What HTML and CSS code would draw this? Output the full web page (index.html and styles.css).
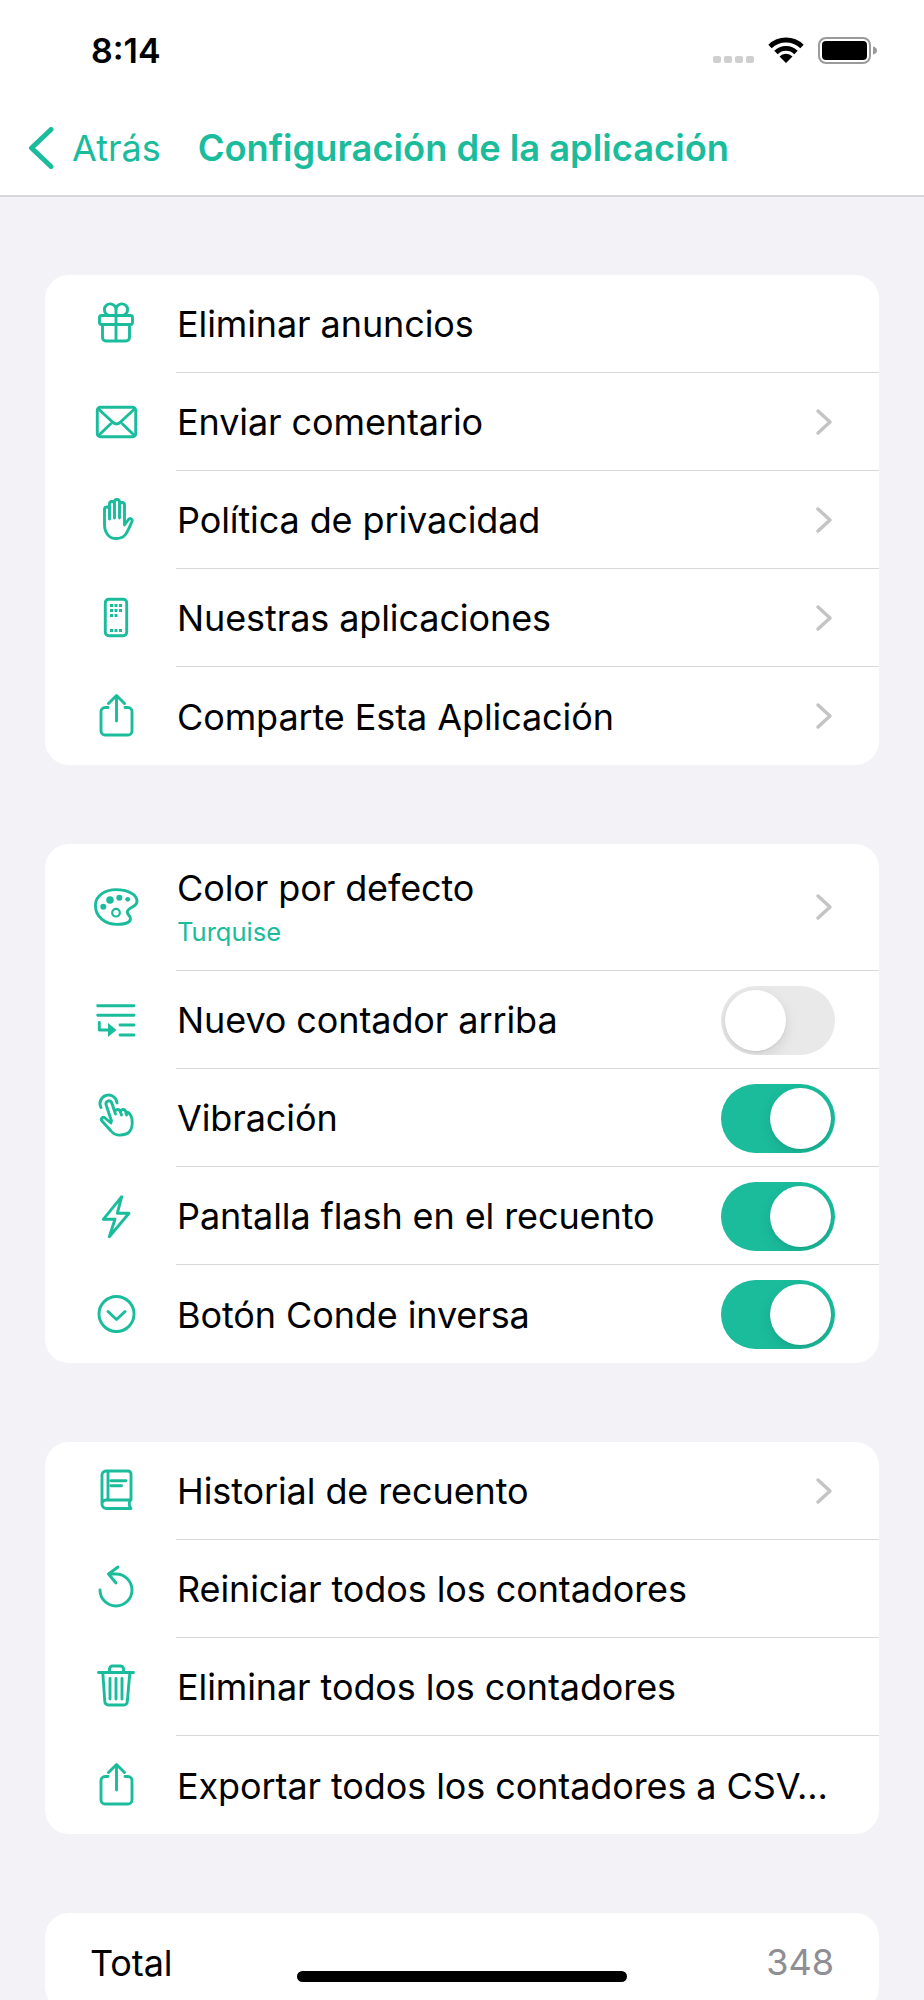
FILE: index.html
```html
<!DOCTYPE html>
<html lang="es">
<head>
    <meta charset="UTF-8">
    <meta name="viewport" content="width=device-width, initial-scale=1.0">
    <title>Configuración de la aplicación</title>
    <link rel="stylesheet" href="styles.css">
</head>
<body>
    <header class="top">
        <div class="status">
            <span class="time">8:14</span>
            <div class="status-icons">
                <div class="signal"><i></i><i></i><i></i><i></i></div>
                <svg class="wifi" width="36" height="26" viewBox="0 0 36 26">
                    <path d="M2 9.500A23 23 0 0 1 34 9.500" fill="none" stroke="#000" stroke-width="4.800"/>
                    <path d="M8 15.500A14 14 0 0 1 28 15.500" fill="none" stroke="#000" stroke-width="4.800"/>
                    <path d="M18 26L11.500 19.500A9 9 0 0 1 24.500 19.500Z" fill="#000"/>
                </svg>
                <svg class="battery" width="60" height="27" viewBox="0 0 60 27">
                    <rect x="1" y="1" width="51" height="25" rx="7" fill="none" stroke="#9a9a9a" stroke-width="2"/>
                    <rect x="4" y="4" width="45" height="19" rx="4" fill="#000"/>
                    <path d="M55 9.500c2.500.5 4 2 4 4s-1.500 3.500-4 4z" fill="#9a9a9a"/>
                </svg>
            </div>
        </div>
        <nav class="nav">
            <svg class="back-icon" width="26" height="42" viewBox="0 0 26 42"><path d="M23 2.500L3.500 21L23 39.500"/></svg>
            <span class="back">Atrás</span>
            <span class="title">Configuración de la aplicación</span>
        </nav>
    </header>

    <main class="content">
        <section class="card">
            <div class="row">
                <svg class="ico" viewBox="0 0 44 44"><rect x="5.500" y="13.500" width="33" height="9" rx="2"/><path d="M8.500 23v12.500a3.500 3.500 0 0 0 3.500 3.500h20a3.500 3.500 0 0 0 3.500-3.500V23M22 13.500V39M22 13.500h-6a5.800 5.800 0 1 1 6-5.500zM22 13.500h6a5.800 5.800 0 1 0-6-5.500z"/></svg>
                <div class="row-body"><span class="label">Eliminar anuncios</span></div>
            </div>
            <div class="row">
                <svg class="ico" viewBox="0 0 44 44"><rect x="3.300" y="7.300" width="38.400" height="29.400" rx="3"/><path d="M4.500 9L19 22.500q3.500 2.800 7 0L40.500 9M4.500 35.500L16.500 24M40.500 35.500L28.500 24"/></svg>
                <div class="row-body"><span class="label">Enviar comentario</span><svg class="chev" width="18" height="28" viewBox="0 0 18 28"><path d="M3 3l12 11L3 25"/></svg></div>
            </div>
            <div class="row">
                <svg class="ico" viewBox="0 0 44 44"><path d="M10.500 26V11.500a2.500 2.500 0 0 1 5 0V21M15.500 20V6a2.500 2.500 0 0 1 5 0v14M20.500 20V4a2.500 2.500 0 0 1 5 0v16M25.500 20V7a2.500 2.500 0 0 1 5 0v20l4-5.500c1.600-2 4.500-.2 3.500 2-2.500 5.500-4 9.500-6.500 13-2 2.700-5 4-9.500 4-6.500 0-11.500-5-11.500-14.500"/></svg>
                <div class="row-body"><span class="label">Política de privacidad</span><svg class="chev" width="18" height="28" viewBox="0 0 18 28"><path d="M3 3l12 11L3 25"/></svg></div>
            </div>
            <div class="row">
                <svg class="ico" viewBox="0 0 44 44"><rect x="11.300" y="3.300" width="21.400" height="36.400" rx="3.500"/><path class="solid" d="M16 8h3v3h-3zM20.500 8h3v3h-3zM25 8h3v3h-3zM16 13h3v3h-3zM20.500 13h3v3h-3zM25 13h3v3h-3zM16 18h3v3h-3zM20.500 18h3v3h-3zM16 33h3v3h-3zM20.500 33h3v3h-3zM25 33h3v3h-3z"/></svg>
                <div class="row-body"><span class="label">Nuestras aplicaciones</span><svg class="chev" width="18" height="28" viewBox="0 0 18 28"><path d="M3 3l12 11L3 25"/></svg></div>
            </div>
            <div class="row">
                <svg class="ico" viewBox="0 0 44 44"><path d="M14 13.500h-3a4 4 0 0 0-4 4V37a4 4 0 0 0 4 4h23a4 4 0 0 0 4-4V17.500a4 4 0 0 0-4-4h-3M22.500 27V2M14.500 9.500l8-8 8 8"/></svg>
                <div class="row-body"><span class="label">Comparte Esta Aplicación</span><svg class="chev" width="18" height="28" viewBox="0 0 18 28"><path d="M3 3l12 11L3 25"/></svg></div>
            </div>
        </section>

        <section class="card">
            <div class="row row-tall">
                <svg class="ico" viewBox="0 0 44 44"><path d="M22 3.600C33 3.600 43 8 43 15.500C43 21 35 21 33.500 25C32 29 37 29 36.500 33C36 37 30 38.400 23 38.400C11 38.400 1.400 31 1.400 19C1.400 10 11 3.600 22 3.600Z"/><circle class="solid" cx="16" cy="14" r="3.800"/><circle class="solid" cx="25.300" cy="11.700" r="3"/><circle class="solid" cx="33.700" cy="13.300" r="2.400"/><circle class="solid" cx="9.300" cy="20.700" r="3"/><circle class="thin" cx="22" cy="26.700" r="3.800"/></svg>
                <div class="row-body">
                    <div class="label-stack"><span class="label">Color por defecto</span><span class="sublabel">Turquise</span></div>
                    <svg class="chev" width="18" height="28" viewBox="0 0 18 28"><path d="M3 3l12 11L3 25"/></svg>
                </div>
            </div>
            <div class="row">
                <svg class="ico" viewBox="0 0 44 44"><path d="M3.700 7.700H40M3.700 17.300H40M26 27h14M26 37h14"/><path d="M5.300 24.500V32H15"/><path class="solid" d="M14 25l8.500 7-8.500 7z"/></svg>
                <div class="row-body"><span class="label">Nuevo contador arriba</span><div class="switch"><span class="knob"></span></div></div>
            </div>
            <div class="row">
                <svg class="ico" viewBox="0 0 44 44"><path d="M7 11.500A8.500 8.500 0 1 1 23 7M17.500 25L12 8.500a3 3 0 0 1 5.600-2L21.500 18M21 15.500a2.700 2.700 0 0 1 5-.5l1.500 4M26.500 15.500a2.700 2.700 0 0 1 5-.5l1 4M32 16c3 0 5 3 6 7c1 7-1 13-6 15c-6 2-12 1-15-3l-9-10c-2-2 1-5 3-3l6 5"/></svg>
                <div class="row-body"><span class="label">Vibración</span><div class="switch on"><span class="knob"></span></div></div>
            </div>
            <div class="row">
                <svg class="ico" viewBox="0 0 44 44"><path d="M27.700 2.700L9.300 25.300H21L15.300 42.700L35 19.300H23.300Z"/></svg>
                <div class="row-body"><span class="label">Pantalla flash en el recuento</span><div class="switch on"><span class="knob"></span></div></div>
            </div>
            <div class="row">
                <svg class="ico" viewBox="0 0 44 44"><circle cx="22.500" cy="22" r="17.500"/><path d="M14 19.500l8.500 8 8.500-8"/></svg>
                <div class="row-body"><span class="label">Botón Conde inversa</span><div class="switch on"><span class="knob"></span></div></div>
            </div>
        </section>

        <section class="card">
            <div class="row">
                <svg class="ico" viewBox="0 0 44 44"><path d="M8 35V6a4 4 0 0 1 4-4h22a3 3 0 0 1 3 3v26H12a4 4 0 0 0-4 4a4.500 4.500 0 0 0 4.500 4.500H37c-2-2-2.500-6-.5-9M14 2.500V30M17 11.700h15M17 16.700h10.500"/></svg>
                <div class="row-body"><span class="label">Historial de recuento</span><svg class="chev" width="18" height="28" viewBox="0 0 18 28"><path d="M3 3l12 11L3 25"/></svg></div>
            </div>
            <div class="row">
                <svg class="ico" viewBox="0 0 44 44"><path d="M15.500 7H22A16 16 0 1 1 6 23M24 0l-9.500 7l7.500 9"/></svg>
                <div class="row-body"><span class="label">Reiniciar todos los contadores</span></div>
            </div>
            <div class="row">
                <svg class="ico" viewBox="0 0 44 44"><path d="M4.500 7.500h35M15.500 7.500V4a3 3 0 0 1 3-3h8a3 3 0 0 1 3 3v3.500M8.800 8l2 28.500a3.500 3.500 0 0 0 3.500 3.500h15.500a3.500 3.500 0 0 0 3.500-3.500L35.800 8M16 13.500V34M22 13.500V34M28 13.500V34"/></svg>
                <div class="row-body"><span class="label">Eliminar todos los contadores</span></div>
            </div>
            <div class="row">
                <svg class="ico" viewBox="0 0 44 44"><path d="M14 13.500h-3a4 4 0 0 0-4 4V37a4 4 0 0 0 4 4h23a4 4 0 0 0 4-4V17.500a4 4 0 0 0-4-4h-3M22.500 27V2M14.500 9.500l8-8 8 8"/></svg>
                <div class="row-body"><span class="label">Exportar todos los contadores a CSV...</span></div>
            </div>
        </section>

        <section class="card">
            <div class="row row-plain">
                <span class="label">Total</span>
                <span class="value">348</span>
            </div>
        </section>
    </main>

    <div class="home-bar"></div>
</body>
</html>
```

FILE: styles.css
```css
* {
    margin: 0;
    padding: 0;
    box-sizing: border-box;
}

html, body {
    height: 2000px;
    overflow: hidden;
}

body {
    position: relative;
    font-family: 'Inter', 'Liberation Sans', sans-serif;
    background: #f2f2f7;
    color: #000;
}

.top {
    background: white;
    border-bottom: 2px solid #d8d8dc;
}

.status {
    height: 100px;
    display: flex;
    align-items: center;
    justify-content: space-between;
    padding: 0 46px 0 91px;
}

.time {
    font-size: 34px;
    font-weight: 600;
}

.status-icons {
    display: flex;
    align-items: center;
    gap: 14px;
}

.signal {
    display: flex;
    gap: 3px;
    align-self: flex-end;
    margin-bottom: 1px;
}

.signal i {
    width: 8px;
    height: 7px;
    border-radius: 2px;
    background: #cfcfcf;
}

.nav {
    height: 95px;
    display: flex;
    align-items: center;
    padding-left: 28px;
    color: #1abc9c;
}

.back-icon {
    fill: none;
    stroke: #1abc9c;
    stroke-width: 5;
    stroke-linecap: round;
    stroke-linejoin: round;
}

.back {
    font-size: 36px;
    margin-left: 18px;
}

.title {
    font-size: 36.3px;
    font-weight: 600;
    margin-left: 37px;
}

.content {
    display: flex;
    flex-direction: column;
    gap: 79px;
    padding: 78px 45px 0;
}

.card {
    background: white;
    border-radius: 24px;
    overflow: hidden;
}

.row {
    height: 98px;
    display: flex;
    align-items: center;
}

.row-tall {
    height: 127px;
}

.row-plain {
    justify-content: space-between;
    padding: 0 45px;
}

.ico {
    flex: none;
    width: 44px;
    height: 44px;
    margin: 0 38px 0 49px;
    overflow: visible;
    fill: none;
    stroke: #1abc9c;
    stroke-width: 2.9;
    stroke-linecap: round;
    stroke-linejoin: round;
}

.ico .solid {
    fill: #1abc9c;
    stroke: none;
}

.ico .thin {
    stroke-width: 2.2;
}

.row-body {
    flex: 1;
    height: 100%;
    display: flex;
    align-items: center;
    justify-content: space-between;
    padding: 0 44px 0 1px;
    border-bottom: 1px solid #d8d8dc;
}

.row:last-child .row-body {
    border-bottom: none;
}

.label {
    font-size: 36px;
    letter-spacing: -0.1px;
    padding-top: 1px;
    white-space: nowrap;
}

.label-stack {
    display: flex;
    flex-direction: column;
    gap: 6px;
    margin-bottom: 2px;
}

.sublabel {
    font-size: 25.500px;
    color: #1abc9c;
}

.value {
    font-size: 36px;
    color: #8e8e93;
}

.chev {
    fill: none;
    stroke: #c4c4c7;
    stroke-width: 3.5;
    stroke-linecap: round;
    stroke-linejoin: round;
    margin-right: 2px;
}

.switch {
    width: 114px;
    height: 69px;
    margin-top: 1px;
    padding: 4px;
    border-radius: 35px;
    background: #e9e9ea;
    display: flex;
    overflow: hidden;
}

.switch.on {
    background: #1abc9c;
    justify-content: flex-end;
}

.knob {
    width: 61px;
    height: 61px;
    border-radius: 50%;
    background: white;
    box-shadow: 0 5px 14px rgba(0,0,0,0.1), 0 1px 2px rgba(0,0,0,0.08);
}

.home-bar {
    position: absolute;
    left: 297px;
    top: 1971px;
    width: 330px;
    height: 11px;
    border-radius: 6px;
    background: black;
}
```
